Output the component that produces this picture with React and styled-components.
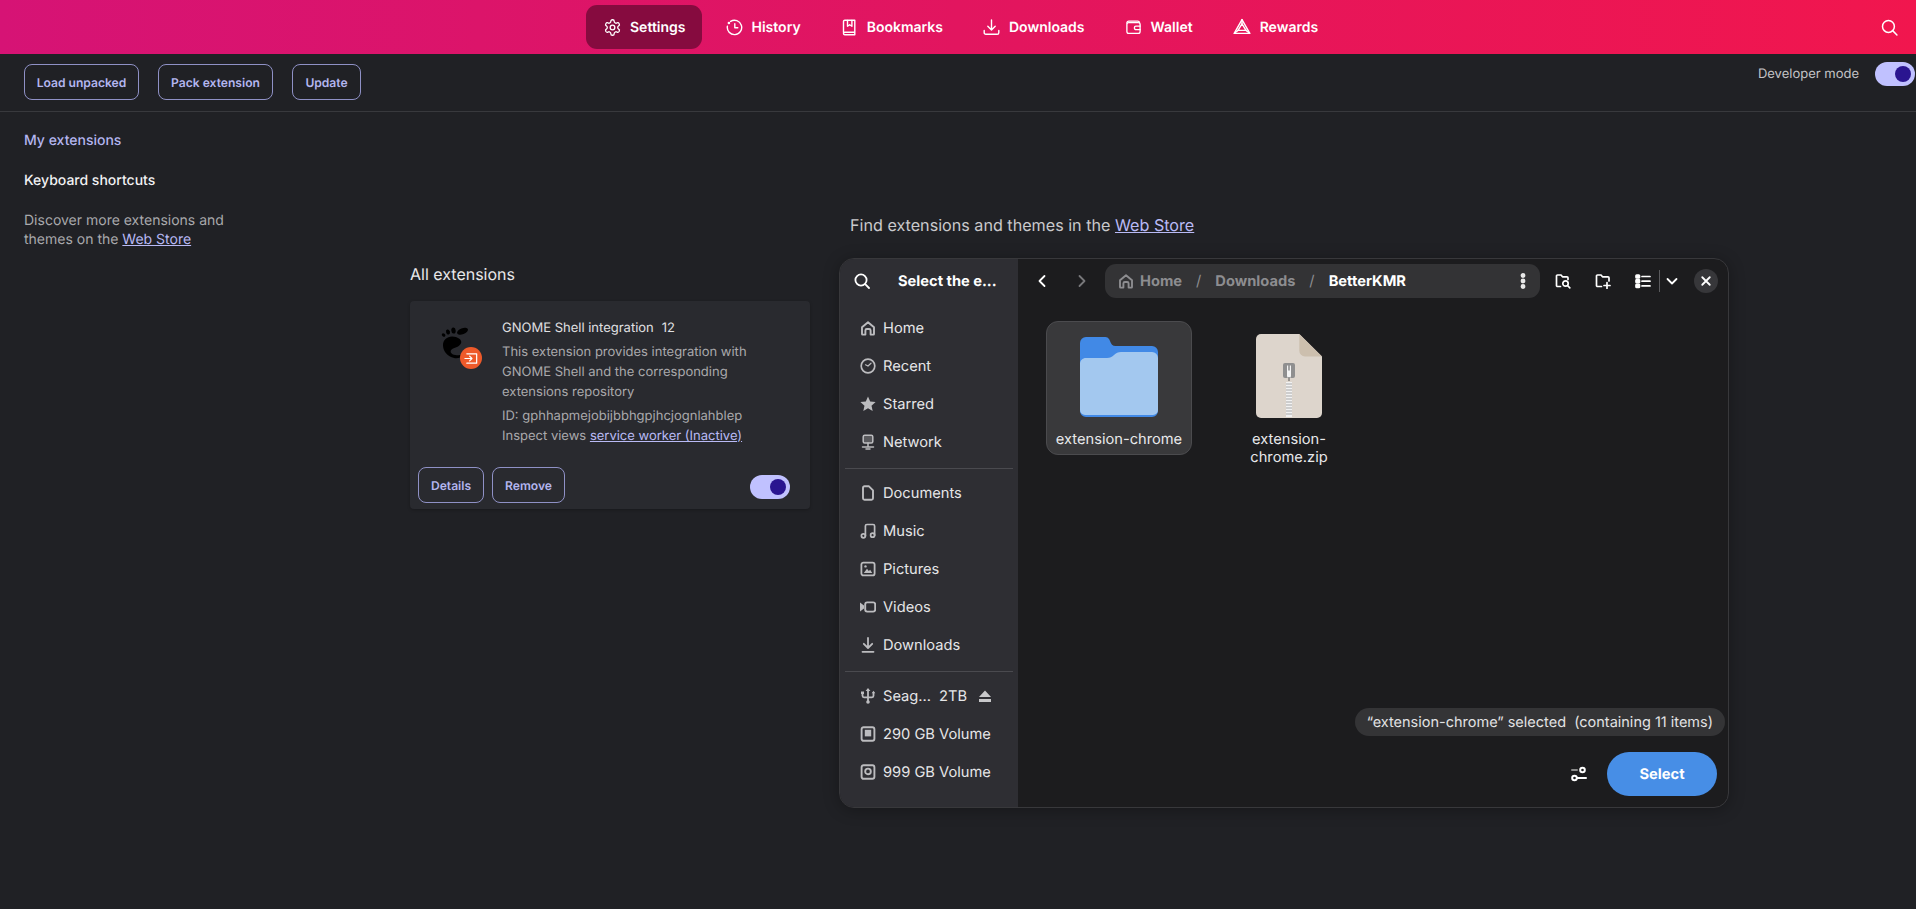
import React from "react";
import styled, { createGlobalStyle } from "styled-components";

const Global = createGlobalStyle`
  html, body { margin: 0; padding: 0; background: #202125; }
  body { font-family: Inter, "Noto Sans", "Liberation Sans", sans-serif; overflow: hidden; text-rendering: geometricPrecision; }
  * { box-sizing: border-box; }
`;

const Page = styled.div`
  position: relative; width: 1916px; height: 909px; overflow: hidden;
  background: #202125; color: #e8e8ea; display: flex; flex-direction: column;
`;
const Header = styled.header`
  height: 54px; flex: none; display: flex; align-items: center; gap: 6px;
  padding: 0 18px 0 586px; background: linear-gradient(90deg, #d61375 0%, #e2155f 50%, #f1164e 100%);
`;
const NavItem = styled.div`
  height: 44px; display: flex; align-items: center; gap: 9px; padding: 0 16px 0 18px; border-radius: 11px;
  font-size: 14px; font-weight: 600; color: #fff;
  background: ${p => (p.$active ? "#860b3f" : "transparent")};
`;
const HeaderSearch = styled.div` margin-left: auto; display: flex; color: #fff; `;
const Glyph = styled.svg`
  width: ${p => p.$w || 16}px; height: ${p => p.$h || p.$w || 16}px; flex: none; display: block;
  fill: none; stroke: currentColor; stroke-width: ${p => p.$sw || 1.4}; stroke-linecap: round; stroke-linejoin: round;
`;
const Toolbar = styled.div`
  height: 58px; flex: none; display: flex; align-items: flex-start; gap: 19px;
  padding: 10px 1px 0 24px; border-bottom: 1px solid #38393d;
`;
const OutlineButton = styled.div`
  height: 36px; display: flex; align-items: center; justify-content: center; width: ${p => p.$w}px;
  border: 1px solid #8f91c6; border-radius: 8px; color: #b4b6f0; font-size: 12.1px; font-weight: 600;
`;
const DevMode = styled.div`
  margin-left: auto; display: flex; align-items: center; gap: 16px; height: 24px; margin-top: -2px;
  font-size: 13px; color: #c4c4c7;
`;
const Toggle = styled.div`
  width: 40px; height: 24px; border-radius: 12px; background: #c0c1ff; display: flex; align-items: center;
  justify-content: flex-end; padding-right: 4px; flex: none;
  &::after { content: ""; width: 16px; height: 16px; border-radius: 50%; background: #2a1590; }
`;
const Body = styled.main` flex: 1; display: grid; grid-template-columns: 410px 1fr; `;
const Side = styled.nav` padding: 8px 0 0 24px; `;
const SideLink = styled.div`
  height: 40px; display: flex; align-items: center; font-size: 14px; font-weight: 500;
  color: ${p => (p.$active ? "#b4b6f0" : "#f2f2f4")};
`;
const SideNote = styled.p`
  margin: 11px 0 0; width: 215px; font-size: 14px; line-height: 19px; color: #a9a9ac;
`;
const A = styled.span` color: #b9baf5; text-decoration: underline; `;
const Content = styled.section` padding-top: 103px; `;
const Find = styled.div` margin-left: 440px; font-size: 16.15px; line-height: 20px; color: #c9c9cc; `;
const Heading = styled.h2`
  margin: 29px 0 17px; font-size: 16px; line-height: 20px; font-weight: 400; color: #e8e8ea;
`;
const Card = styled.article`
  width: 400px; height: 208px; background: #292a2f; border-radius: 4px; padding-top: 17px;
  display: flex; flex-direction: column; box-shadow: 0 1px 3px rgba(0,0,0,.25);
`;
const CardTop = styled.div` display: flex; `;
const Logo = styled.div` position: relative; margin: 8px 31px 0 31px; width: 30px; height: 34px; flex: none; `;
const Badge = styled.div`
  position: absolute; left: 19px; top: 21px; width: 22px; height: 22px; border-radius: 50%;
  background: #ee5a2a; color: #fff; display: flex; align-items: center; justify-content: center;
`;
const Info = styled.div` font-size: 13px; line-height: 20px; color: #a9a9ac; `;
const Title = styled.div` color: #e0e0e3; display: flex; gap: 8px; `;
const Desc = styled.div` margin-top: 4px; width: 260px; `;
const Meta = styled.div` margin-top: 4px; `;
const CardFoot = styled.div`
  margin-top: 21px; display: flex; gap: 8px; padding: 0 20px 0 8px;
  & > :last-child { margin-left: auto; margin-top: 8px; }
`;

const Dialog = styled.div`
  position: absolute; left: 839px; top: 258px; width: 890px; height: 550px; border-radius: 15px;
  border: 1px solid #38383b; background: #1c1c1e; overflow: hidden; display: flex;
  box-shadow: 0 2px 16px rgba(0,0,0,.3);
`;
const DSide = styled.aside` width: 178px; flex: none; background: #2e2e33; color: #e6e6e8; font-size: 14.67px; `;
const DSideHead = styled.div`
  height: 43px; display: flex; align-items: center; padding-left: 14px; gap: 28px; color: #fff; font-weight: 700;
  margin-bottom: 7px;
`;
const Row = styled.div` height: 38px; display: flex; align-items: center; gap: 7px; padding-left: 20px; `;
const RowIcon = styled.span` color: #bcbcbf; display: flex; `;
const PathHome = styled(RowIcon)` color: #8d8d90; margin-right: 6px; `;
const Sep = styled.hr` margin: 7px 5px 5px 5px; border: 0; height: 1px; background: #4a4a4f; `;
const Eject = styled.span` color: #c8c8ca; display: flex; margin-left: 3px; `;
const SizeTag = styled.span` margin-left: 1px; `;
const DMain = styled.div` flex: 1; display: flex; flex-direction: column; min-width: 0; `;
const DBar = styled.div` height: 39px; flex: none; display: flex; align-items: flex-end; padding-left: 6px; color: #fff; `;
const IconBtn = styled.div`
  width: ${p => p.$w || 36}px; height: 34px; flex: none; display: flex; align-items: center; justify-content: center;
  margin-left: ${p => p.$ml || 0}px; color: ${p => (p.$dim ? "#77777a" : "#fff")};
`;
const PathBar = styled.div`
  width: 435px; height: 34px; margin: 0 3px 0 5px; flex: none; background: #333335; border-radius: 11px; display: flex; align-items: center;
  padding: 0 9px 0 13px; font-size: 14.67px; font-weight: 700; color: #8d8d90;
`;
const Crumb = styled.span` color: ${p => (p.$cur ? "#fff" : "#8d8d90")}; `;
const Slash = styled.span` margin-left: 14px; margin-right: 14px; font-weight: 400; `;
const More = styled.span` margin-left: auto; display: flex; color: #e8e8e8; `;
const VLine = styled.span` width: 1px; height: 22px; background: #5a5a5d; margin: 0 0 6px 1px; align-self: flex-end; `;
const Close = styled.div`
  width: 24px; height: 24px; border-radius: 50%; background: #37373a; margin: 0 0 5px 10px; display: flex;
  align-items: center; justify-content: center; color: #fff; flex: none;
`;
const Files = styled.div` flex: 1; display: flex; gap: 24px; padding: 23px 0 0 28px; align-items: flex-start; `;
const FileItem = styled.div`
  width: 146px; height: ${p => (p.$sel ? "134px" : "auto")}; padding-top: 12px; border-radius: 12px; display: flex; flex-direction: column; align-items: center;
  border: 1px solid ${p => (p.$sel ? "#4b4b4e" : "transparent")}; background: ${p => (p.$sel ? "#39393b" : "transparent")};
`;
const FileThumb = styled.div` height: 84px; display: flex; align-items: flex-start; `;
const FolderArt = styled.svg` width: 78px; height: 80px; margin-top: 3px; display: block; `;
const ZipArt = styled.svg` width: 66px; height: 84px; display: block; `;
const FileLabel = styled.div` margin-top: 12px; width: 130px; text-align: center; font-size: 14.67px; line-height: 18px; color: #e8e8ea; `;
const StatusRow = styled.div` display: flex; justify-content: flex-end; padding-right: 3px; `;
const StatusPill = styled.div`
  height: 28px; padding: 0 12px; border-radius: 14px; background: #343436; display: flex; align-items: center;
  font-size: 14.5px; color: #e2e2e4; white-space: pre;
`;
const DFoot = styled.div` display: flex; justify-content: flex-end; align-items: center; gap: 13px; margin-top: 16px; padding: 0 11px 11px 0; color: #fff; `;
const SelectBtn = styled.div`
  width: 110px; height: 44px; border-radius: 22px; background: #478ee6; color: #fff; font-weight: 700; font-size: 14.67px;
  display: flex; align-items: center; justify-content: center;
`;
const FilterIcon = styled.span` width: 30px; display: flex; justify-content: center; `;

const I = ({ children, w = 16, h, sw, vb = "0 0 16 16" }) => (
  <Glyph viewBox={vb} $w={w} $h={h} $sw={sw}>{children}</Glyph>
);
const F = styled.path` fill: currentColor; stroke: none; `;

const GearIcon = () => (
  <I w={17} vb="1 1 22 22" sw={1.7}>
    <path d="M12.2 2h-.4a2 2 0 0 0-2 2v.2a2 2 0 0 1-1 1.7l-.4.3a2 2 0 0 1-2 0l-.2-.1a2 2 0 0 0-2.7.7l-.2.4a2 2 0 0 0 .7 2.7l.2.1a2 2 0 0 1 1 1.7v.6a2 2 0 0 1-1 1.7l-.2.1a2 2 0 0 0-.7 2.7l.2.4a2 2 0 0 0 2.7.7l.2-.1a2 2 0 0 1 2 0l.4.3a2 2 0 0 1 1 1.7v.2a2 2 0 0 0 2 2h.4a2 2 0 0 0 2-2v-.2a2 2 0 0 1 1-1.7l.4-.3a2 2 0 0 1 2 0l.2.1a2 2 0 0 0 2.7-.7l.2-.4a2 2 0 0 0-.7-2.7l-.2-.1a2 2 0 0 1-1-1.7v-.6a2 2 0 0 1 1-1.7l.2-.1a2 2 0 0 0 .7-2.7l-.2-.4a2 2 0 0 0-2.7-.7l-.2.1a2 2 0 0 1-2 0l-.4-.3a2 2 0 0 1-1-1.7V4a2 2 0 0 0-2-2z" />
    <circle cx="12" cy="12" r="3" />
  </I>
);
const HistoryIcon = () => (
  <I w={17} vb="0 0 17 17">
    <path d="M4.6 2.4A7.2 7.2 0 1 1 1.4 7.2" /><path d="M8.8 4.8v4h3" />
    <circle cx="2.9" cy="4" r="1.3" fill="currentColor" stroke="none" />
  </I>
);
const BookIcon = () => (
  <I w={17} vb="0 0 17 17">
    <path d="M2.5 13.5V2.5a1.3 1.3 0 0 1 1.3-1.3h10v12H3.8a1.3 1.3 0 0 0 0 2.6h10v-2.5" />
    <path d="M6.5 1.5v5.8l2.2-1.6 2.2 1.6V1.5" />
  </I>
);
const DownIcon = () => (
  <I w={17} vb="0 0 17 17">
    <path d="M8.5 1v9.8M4.8 7.3l3.7 3.7 3.7-3.7" /><path d="M1.2 11.5v2.2a1.6 1.6 0 0 0 1.6 1.6h11.4a1.6 1.6 0 0 0 1.6-1.6v-2.2" />
  </I>
);
const WalletIcon = () => (
  <I w={17} vb="0 0 18 18">
    <path d="M2 4.2A2 2 0 0 1 4 2.2h9.5a2 2 0 0 1 1.9 1.5" />
    <rect x="2" y="3.8" width="14" height="11.4" rx="2" />
    <path d="M16 7.5h-4.5a1.5 1.5 0 0 0-1.5 1.5v.8a1.5 1.5 0 0 0 1.5 1.5H16" />
  </I>
);
const RewardsIcon = () => (
  <I w={18} vb="0 0 18 18">
    <path d="M9 1.6 16.8 15.4H1.2z" /><path d="M9 5.8 13 12.4H5z" /><path d="M1.4 15.2 5 12.4M16.6 15.2 13 12.4M9 1.6v4.2" />
  </I>
);
const SearchIcon = ({ w = 16, sw = 1.4 }) => (
  <I w={w} sw={sw}><circle cx="7" cy="7" r="5.6" /><path d="m11.2 11.2 3.8 3.8" /></I>
);

const sidebarIcons = {
  home: <I sw={1.9}><path d="M2 14V7.2L8 2.200l6 5V14a.6.6 0 0 1-.6.6h-2.800V10.500A1.500 1.500 0 0 0 9.100 9H6.900a1.500 1.500 0 0 0-1.500 1.500v4.100H2.600A.6.6 0 0 1 2 14z" /></I>,
  recent: <I sw={1.7}><circle cx="8" cy="8" r="6.800" /><path d="M8 8 11 5.200M8 8 5.500 6.800" strokeWidth="1.200" /></I>,
  star: <I><F d="M8 .6l2.2 5 5.4.5-4.1 3.6 1.2 5.3L8 12.2 3.3 15l1.2-5.3L.4 6.1l5.4-.5z" /></I>,
  net: <I sw={1.5}><rect x="3.200" y="1.200" width="9.600" height="7.800" rx="1.500" fill="currentColor" fillOpacity=".3" /><path d="M8 9v3M2.500 13h11M6 15h4" /></I>,
  doc: <I sw={1.9}><path d="M3 2.800A1.500 1.500 0 0 1 4.500 1.300H9l4 4v8A1.500 1.500 0 0 1 11.500 14.800h-7A1.500 1.500 0 0 1 3 13.300z" /></I>,
  music: <I sw={1.7}><circle cx="3.400" cy="12.800" r="2" /><circle cx="12.600" cy="12.200" r="2" /><path d="M5.400 12.800V3a1.500 1.500 0 0 1 1.500-1.500h6.200A1.500 1.500 0 0 1 14.600 3V12.200" /></I>,
  pic: <I sw={1.8}><rect x="1.400" y="1.600" width="13.200" height="12.800" rx="2" /><F d="M3.800 12 7 7.800l1.800 2.100 1.400-1.200 2 3.300z" /><circle cx="5.500" cy="5.400" r="1.200" fill="currentColor" stroke="none" /></I>,
  vid: <I sw={1.9}><rect x="5.200" y="3.400" width="10" height="9.200" rx="2" /><F d="M0 3.600 4 6.400v3.200L0 12.400z" /></I>,
  dl: <I sw={1.8}><path d="M8 1v9.500M3.800 6.800 8 11l4.200-4.200M2.500 14.800h11" /></I>,
  usb: <I sw={1.8}><path d="M8 2V14M2.500 6v1.800a1.500 1.500 0 0 0 1.500 1.500h8a1.500 1.500 0 0 0 1.500-1.500V5" /><circle cx="8" cy="14" r="1.800" fill="currentColor" stroke="none" /><F d="M8 0l2.400 3H5.600zM1 3.400h3V6H1zM13.500 2.800l1.800 2.400h-3.600z" /></I>,
  sd: <I sw={1.9}><rect x="1.600" y="1.200" width="12.800" height="13.600" rx="2" /><F d="M4.800 3.800h6.400v6.600H4.800z" /></I>,
  disk: <I sw={1.9}><rect x="1.600" y="1.200" width="12.800" height="13.600" rx="2" /><circle cx="8" cy="7.400" r="2.800" /></I>,
};

const placesA = [["home", "Home"], ["recent", "Recent"], ["star", "Starred"], ["net", "Network"]];
const placesB = [["doc", "Documents"], ["music", "Music"], ["pic", "Pictures"], ["vid", "Videos"], ["dl", "Downloads"]];
const Place = ({ icon, label }) => (
  <Row><RowIcon>{sidebarIcons[icon]}</RowIcon>{label}</Row>
);

const GnomeFoot = () => (
  <svg viewBox="0 0 30 34" width="30" height="34" style={{ display: "block" }}>
    <g fill="#000">
      <ellipse cx="2.6" cy="9" rx="1.5" ry="2" transform="rotate(-50 2.6 9)" />
      <ellipse cx="7" cy="6" rx="1.9" ry="2.6" transform="rotate(-20 7 6)" />
      <ellipse cx="12.5" cy="4.6" rx="2.2" ry="3" transform="rotate(-5 12.5 4.6)" />
      <ellipse cx="21.5" cy="5.2" rx="5.8" ry="3" transform="rotate(-22 21.5 5.2)" />
      <path d="M11 10.5C6 10.6 1.800 14 2 19.500c.2 5 3 8.800 7 11 3.600 2 7.600 2.400 10 1 1.600-.9 1.600-2.800-.2-2.600-2.600.4-6.400.6-8.400-1.600-1.400-1.500-.8-3.600 1.200-4.600 3-1.400 7.400-2.200 8.600-6 .9-3.200-4-6.300-9.200-6.200z" />
    </g>
  </svg>
);

const Folder = () => (
  <FolderArt viewBox="0 0 78 80">
    <path d="M6 0h18c4 0 5 1.500 6 4 1 3 2.500 5 5.500 5H72a6 6 0 0 1 6 6v59a6 6 0 0 1-6 6H6a6 6 0 0 1-6-6V6a6 6 0 0 1 6-6z" fill="#4189e6" />
    <path d="M0 27c0-3.500 2.500-6 6-6h21c3 0 5-1 7-3 2-2 4-3 7-3h31a6 6 0 0 1 6 6v52a5 5 0 0 1-5 5H5a5 5 0 0 1-5-5z" fill="#a3c8ef" />
  </FolderArt>
);
const Zip = () => (
  <ZipArt viewBox="0 0 66 84">
    <path d="M5 0h38.300L66 22.500V79a5 5 0 0 1-5 5H5a5 5 0 0 1-5-5V5a5 5 0 0 1 5-5z" fill="#ddd5cc" />
    <path d="M43.300 0 66 22.500H49a5.700 5.700 0 0 1-5.700-5.700z" fill="#ccbfae" />
    <rect x="27" y="29" width="12" height="15" rx="2" fill="#8f8f8f" />
    <path d="M31 31.500h1.200v5h1.600v-5H35V42a2 2 0 0 1-4 0z" fill="#f4f4f4" />
    <path d="M33 43v4" stroke="#555" strokeWidth="1" />
    <rect x="30" y="48" width="6" height="35" fill="#f2f2f2" />
    <path d="M30 50h6M30 53h6M30 56h6M30 59h6M30 62h6M30 65h6M30 68h6M30 71h6M30 74h6M30 77h6M30 80h6" stroke="#a8a8a8" strokeWidth="1.100" />
  </ZipArt>
);

export default function App() {
  return (
    <Page>
      <Global />
      <Header>
        <NavItem $active><GearIcon />Settings</NavItem>
        <NavItem><HistoryIcon />History</NavItem>
        <NavItem><BookIcon />Bookmarks</NavItem>
        <NavItem><DownIcon />Downloads</NavItem>
        <NavItem><WalletIcon />Wallet</NavItem>
        <NavItem><RewardsIcon />Rewards</NavItem>
        <HeaderSearch><SearchIcon w={17} /></HeaderSearch>
      </Header>
      <Toolbar>
        <OutlineButton $w={115}>Load unpacked</OutlineButton>
        <OutlineButton $w={115}>Pack extension</OutlineButton>
        <OutlineButton $w={69}>Update</OutlineButton>
        <DevMode>Developer mode<Toggle /></DevMode>
      </Toolbar>
      <Body>
        <Side>
          <SideLink $active>My extensions</SideLink>
          <SideLink>Keyboard shortcuts</SideLink>
          <SideNote>Discover more extensions and<br />themes on the <A>Web Store</A></SideNote>
        </Side>
        <Content>
          <Find>Find extensions and themes in the <A>Web Store</A></Find>
          <Heading>All extensions</Heading>
          <Card>
            <CardTop>
              <Logo>
                <GnomeFoot />
                <Badge>
                  <I w={15} sw={1.3}><path d="M3 3h10.500v10H3M1 8h7.500M6 5.500 8.500 8 6 10.500" /></I>
                </Badge>
              </Logo>
              <Info>
                <Title><span>GNOME Shell integration</span><span>12</span></Title>
                <Desc>This extension provides integration with GNOME Shell and the corresponding extensions repository</Desc>
                <Meta>ID: gphhapmejobijbbhgpjhcjognlahblep<br />Inspect views <A>service worker (Inactive)</A></Meta>
              </Info>
            </CardTop>
            <CardFoot>
              <OutlineButton $w={66}>Details</OutlineButton>
              <OutlineButton $w={73}>Remove</OutlineButton>
              <Toggle />
            </CardFoot>
          </Card>
        </Content>
      </Body>
      <Dialog>
        <DSide>
          <DSideHead><SearchIcon sw={1.8} />Select the e...</DSideHead>
          {placesA.map(([i, l]) => <Place key={l} icon={i} label={l} />)}
          <Sep />
          {placesB.map(([i, l]) => <Place key={l} icon={i} label={l} />)}
          <Sep />
          <Row>
            <RowIcon>{sidebarIcons.usb}</RowIcon>Seag...<SizeTag>2TB</SizeTag>
            <Eject><I sw={0}><F d="M8 2.500 14 9H2zM2 11h12v3H2z" /></I></Eject>
          </Row>
          <Place icon="sd" label="290 GB Volume" />
          <Place icon="disk" label="999 GB Volume" />
        </DSide>
        <DMain>
          <DBar>
            <IconBtn><I sw={1.8}><path d="M10.500 3 5.500 8l5 5" /></I></IconBtn>
            <IconBtn $ml={4} $dim><I sw={1.8}><path d="M5.500 3l5 5-5 5" /></I></IconBtn>
            <PathBar>
              <PathHome>{sidebarIcons.home}</PathHome>
              <Crumb>Home</Crumb><Slash>/</Slash><Crumb>Downloads</Crumb><Slash>/</Slash><Crumb $cur>BetterKMR</Crumb>
              <More><I sw={0}><circle cx="8" cy="2.500" r="1.700" fill="currentColor" /><circle cx="8" cy="8" r="1.700" fill="currentColor" /><circle cx="8" cy="13.500" r="1.700" fill="currentColor" /></I></More>
            </PathBar>
            <IconBtn $w={40}><I sw={1.700}><path d="M5.500 13.500H2.500a1 1 0 0 1-1-1v-9.500a1 1 0 0 1 1-1H6l1.500 1.800H12a1 1 0 0 1 1 1V6.500" /><circle cx="10.500" cy="10.500" r="2.700" /><path d="m12.500 12.500 2.300 2.300" /></I></IconBtn>
            <IconBtn $w={40}><I sw={1.700}><path d="M6.500 13.500h-4a1 1 0 0 1-1-1v-9.500a1 1 0 0 1 1-1H6l1.500 1.800H13a1 1 0 0 1 1 1V8" /><path d="M12 9.500v6M9 12.500h6" /></I></IconBtn>
            <IconBtn $w={30} $ml={5}><I sw={1.700}><rect x="1" y="2" width="3.500" height="3" rx=".7" fill="currentColor" /><rect x="1" y="6.700" width="3.500" height="3" rx=".7" fill="currentColor" /><rect x="1" y="11.400" width="3.500" height="3" rx=".7" fill="currentColor" /><path d="M7 3.500h8M7 8.200h8M7 12.900h8" /></I></IconBtn>
            <VLine />
            <IconBtn $w={24}><I sw={1.800}><path d="M3.500 6l4.500 4.500L12.500 6" /></I></IconBtn>
            <Close><I w={12} sw={2.400}><path d="M3 3l10 10M13 3 3 13" /></I></Close>
          </DBar>
          <Files>
            <FileItem $sel><FileThumb><Folder /></FileThumb><FileLabel>extension-chrome</FileLabel></FileItem>
            <FileItem><FileThumb><Zip /></FileThumb><FileLabel>extension-<br />chrome.zip</FileLabel></FileItem>
          </Files>
          <StatusRow><StatusPill>“extension-chrome” selected  (containing 11 items)</StatusPill></StatusRow>
          <DFoot>
            <FilterIcon>
              <I sw={2}><path d="M1 4h5" stroke="#8a8a8a" /><circle cx="11.500" cy="4" r="2.300" /><circle cx="3.500" cy="12" r="2.300" /><path d="M6 12h9" /></I>
            </FilterIcon>
            <SelectBtn>Select</SelectBtn>
          </DFoot>
        </DMain>
      </Dialog>
    </Page>
  );
}
